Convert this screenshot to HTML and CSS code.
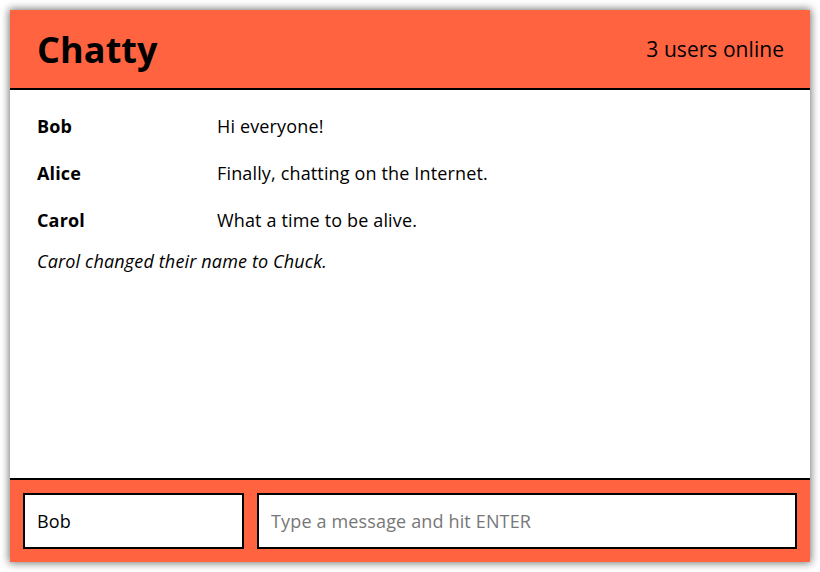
FILE: index.html
```html
<!DOCTYPE html>
<html>
<head>
<meta charset="utf-8">
<link rel="stylesheet" href="styles.css">
</head>
<body>
<div class="app">
  <header class="header">
    <h1 class="title">Chatty</h1>
    <div class="online">3 users online</div>
  </header>
  <main class="messages">
    <div class="msg"><span class="name">Bob</span><span class="text">Hi everyone!</span></div>
    <div class="msg"><span class="name">Alice</span><span class="text">Finally, chatting on the Internet.</span></div>
    <div class="msg"><span class="name">Carol</span><span class="text">What a time to be alive.</span></div>
    <div class="notice">Carol changed their name to Chuck.</div>
  </main>
  <footer class="footer">
    <input class="field username" type="text" value="Bob">
    <input class="field message" type="text" placeholder="Type a message and hit ENTER">
  </footer>
</div>
</body>
</html>
```
FILE: styles.css
```css
* { box-sizing: border-box; }
html, body { margin: 0; padding: 0; background: #fff; }
body {
  font-family: "Open Sans", "DejaVu Sans", sans-serif;
  color: #000;
  padding: 10px;
  height: 572px;
}
.app {
  width: 800px;
  height: 552px;
  display: flex;
  flex-direction: column;
  background: #fff;
  box-shadow: 0 0 8px 1px rgba(0,0,0,0.55);
}
.header {
  height: 80px;
  background: #ff6340;
  border-bottom: 2px solid #000;
  display: flex;
  align-items: center;
  justify-content: space-between;
  padding: 0 26px 0 27px;
  flex: none;
}
.title {
  margin: 0;
  font-size: 36px;
  font-weight: 700;
  line-height: 1;
  letter-spacing: 0.1px;
  padding-top: 1px;
}
.online {
  font-size: 21px;
  letter-spacing: 0.05px;
}
.messages {
  flex: 1;
  padding: 23px 27px 0;
  font-size: 18px;
  line-height: 27px;
  letter-spacing: 0.15px;
}
.msg {
  display: flex;
  margin-bottom: 20px;
}
.name {
  width: 180px;
  font-weight: 700;
  flex: none;
}
.notice {
  font-style: italic;
  margin-top: -6px;
}
.footer {
  height: 84px;
  flex: none;
  background: #ff6340;
  border-top: 2px solid #000;
  display: flex;
  gap: 13px;
  padding: 13px;
}
.field {
  height: 56px;
  border: 2px solid #000;
  background: #fff;
  font-family: "Open Sans", "DejaVu Sans", sans-serif;
  font-size: 18px;
  letter-spacing: 0.15px;
  color: #000;
  padding: 0 12px;
  outline: none;
  margin: 0;
}
.username { width: 221px; flex: none; }
.message { flex: 1; min-width: 0; }
.message::placeholder { color: #777; }
```
